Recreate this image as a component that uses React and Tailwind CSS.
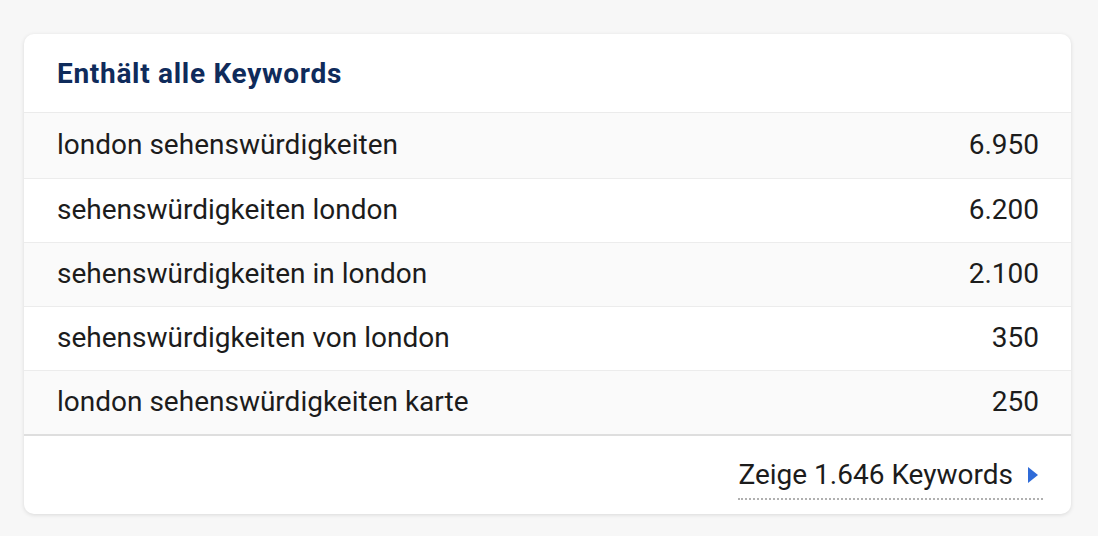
const rows = [
  ['london sehenswürdigkeiten', '6.950'],
  ['sehenswürdigkeiten london', '6.200'],
  ['sehenswürdigkeiten in london', '2.100'],
  ['sehenswürdigkeiten von london', '350'],
  ['london sehenswürdigkeiten karte', '250'],
]

export default function App() {
  return (
    <div className="min-h-screen bg-[#f7f7f7] pt-[34px] pl-[24px] pr-[27px] font-['Roboto',sans-serif]">
      <div className="bg-white rounded-[10px] shadow-[0_1px_4px_rgba(0,0,0,0.12)] overflow-hidden">
        <div className="h-[79px] flex items-center pl-[33px] pt-[1px] border-b border-[#ebebeb]">
          <h2 className="text-[28px] font-bold text-[#0f2b5b] tracking-[0.7px]">Enthält alle Keywords</h2>
        </div>
        <div>
          {rows.map(([kw, vol], i) => (
            <div
              key={kw}
              className={`flex items-center justify-between pr-[32px] pl-[33px] pb-[2px] text-[28px] text-[#1c1c1c] ${
                i % 2 === 0 ? 'bg-[#fafafa]' : 'bg-white'
              } ${i === 0 ? 'h-[66px]' : i === rows.length - 1 ? 'h-[63px]' : 'h-[64px]'} ${
                i < rows.length - 1 ? 'border-b border-[#ececec]' : ''
              }`}
            >
              <span>{kw}</span>
              <span>{vol}</span>
            </div>
          ))}
        </div>
        <div className="h-[80px] border-t-2 border-[#dedede] flex items-start justify-end pr-[28px] pt-[22px]">
          <a className="flex items-center gap-[15px] border-b-2 border-dotted border-[#b0b0b0] pb-[6px] text-[28px] leading-[34px] text-[#1c1c1c] cursor-pointer">
            <span>Zeige 1.646 Keywords</span>
            <svg width="10" height="16" viewBox="0 0 10 16" className="mr-[5px]">
              <path d="M0 0 L10 8 L0 16 Z" fill="#2f6bd8" />
            </svg>
          </a>
        </div>
      </div>
    </div>
  )
}
